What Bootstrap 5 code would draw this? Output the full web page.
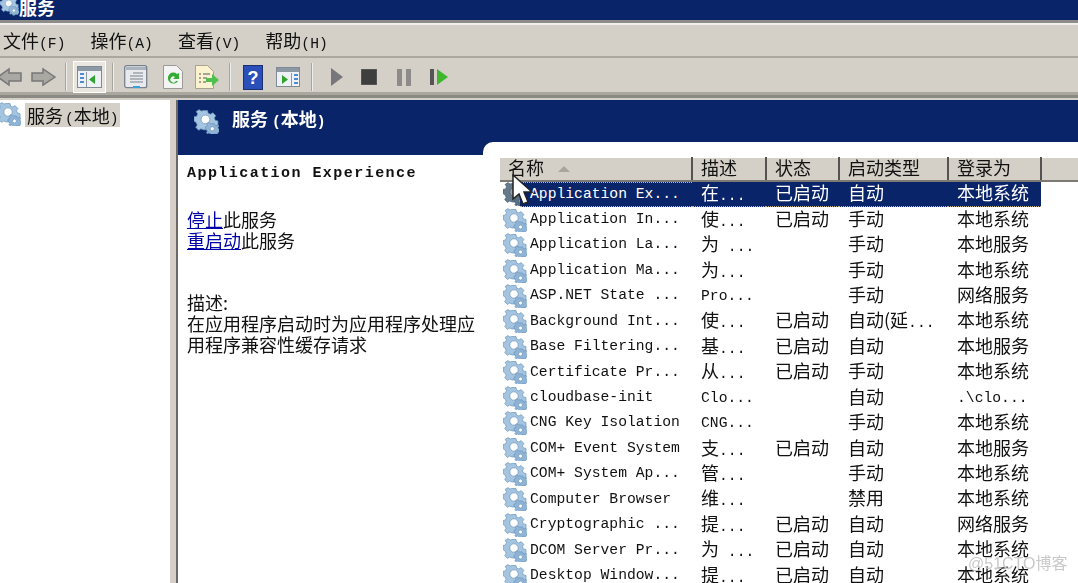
<!DOCTYPE html>
<html lang="zh-CN">
<head>
<meta charset="utf-8">
<title>服务</title>
<link href="https://cdn.jsdelivr.net/npm/bootstrap@5.3.0/dist/css/bootstrap.min.css" rel="stylesheet">
<style>
:root{--navy:#0a246a;--chrome:#d4d0c8;}
html,body{height:583px;overflow:hidden;}
body{background:var(--chrome);font-family:"Noto Sans CJK SC","Liberation Sans",sans-serif;font-size:18px;color:#111;position:relative;filter:blur(.35px);}
.svc-gear{width:24px;height:24px;flex:none;}
.title-strip{height:20px;background:var(--navy);color:#fff;font-weight:700;font-size:18px;line-height:14px;overflow:hidden;}
.title-strip .svc-gear{margin-top:-7px;width:19px;height:24px;}
.menu-strip{height:38px;border-top:3px solid #8e8c88;box-shadow:inset 0 2px 0 #f2f0ec;border-bottom:2px solid #aaa79f;padding-left:3px;gap:25px;}
.menu-strip>span{line-height:35px;font-size:18px;}
.mono{font-family:"Liberation Mono",monospace;font-size:14.7px;}
.cjk{font-family:"Noto Sans CJK SC",sans-serif;font-size:18px;line-height:1;}
.tool-strip{height:37px;border-bottom:3px solid #aaa79f;padding-top:4px;}
.tool-sep{width:2px;height:28px;background:#a8a59e;border-right:1px solid #eee;flex:none;}
.tool-ico{flex:none;display:block;}
.tool-on{width:33px;height:32px;background:#e9e6df;border:1px solid #fff;display:flex;align-items:center;justify-content:center;margin:0 6px;}
.panes{height:488px;border-top:3px solid #8b8984;padding-top:2px;}
.tree-pane{width:170px;background:#fff;flex:none;font-size:18px;}
.tree-sel{background:var(--chrome);line-height:24px;padding:0 1px 0 2px;height:24px;display:inline-block;margin:3px 0 0 4px;}
.tree-sel .paren-gap{margin-left:2px;}
.tree-pane .svc-gear{margin-left:-3px;margin-top:2px;}
.paren-gap{margin-left:4px;}
.split-bar{width:8px;flex:none;background:var(--chrome);border-right:2px solid #6b6966;}
.right-pane{flex:1;min-width:0;background:var(--navy);}
.head-band{height:42px;flex:none;color:#fff;font-weight:700;padding-left:16px;gap:13px;}
.head-band .svc-gear{width:25px;height:25px;margin-top:9px;}
.head-band span{line-height:26px;margin-top:5px;}
.head-band span span{margin-top:0;}
.lower-band{min-height:0;}
.desc-col{width:305px;flex:none;margin-top:13px;background:#fff;padding:9px 0 0 9px;line-height:21.3px;font-size:18px;}
.desc-title{font-family:"Liberation Mono",monospace;font-weight:700;font-size:15px;letter-spacing:1.45px;line-height:20px;margin-bottom:25px;}
.desc-gap{margin-top:40px;}
.desc-col a{color:#0000a8;}
.list-col{flex:1;background:#fff;border-top-left-radius:10px;padding:15px 0 0 17px;overflow:hidden;min-width:0;}
.svc-table{table-layout:fixed;width:578px;margin:0;--bs-table-bg:transparent;font-size:18px;}
.svc-table th{height:23px;padding:0 0 3px 8px;background:var(--chrome);font-weight:400;border:0;border-right:2px solid #55534f;border-bottom:2px solid #7d7a74;border-top:1px solid #fff;line-height:18px;white-space:nowrap;color:#111;vertical-align:middle;}
.svc-table th:last-child{border-right:0;}
.svc-table td{height:25.45px;padding:0 0 0 9px;border:0;white-space:nowrap;line-height:18px;vertical-align:middle;color:#111;}
.svc-table td.cjk{padding-bottom:4px;}
.svc-table td:first-child{padding:0;}
.name-cell{display:flex;align-items:center;height:25.45px;}
.name-cell .svc-gear{margin-left:3px;margin-right:-1px;}
.name-cell span{padding-left:4px;flex:1;height:25.45px;line-height:25px;}
.svc-table .row-on td{background:var(--navy);color:#fff;border-block:1px dotted #c3b27a;}
.svc-table .row-on td:first-child{background:#fff;border:0;}
.svc-table .row-on td:last-child{background:#fff;border:0;}
.row-on .name-cell span{background:var(--navy);color:#fff;border-block:1px dotted #c3b27a;margin-left:-6px;padding-left:10px;position:relative;line-height:22px;}
.row-on .svc-gear{filter:brightness(.62);}
.sort-mark{display:inline-block;width:0;height:0;border:6px solid transparent;border-top:0;border-bottom:6px solid #a8a59e;margin-left:14px;vertical-align:3px;}
.svc-pointer{position:absolute;left:511px;top:174px;width:22px;height:32px;}
.mark-text{position:absolute;left:968px;top:552px;font-size:16px;color:#c9c9c9;font-family:"Liberation Sans","Noto Sans CJK SC",sans-serif;}
</style>
</head>
<body>
<svg width="0" height="0" class="position-absolute">
<defs>
<symbol id="gear" viewBox="0 0 24 24">
<g fill="#a4c4e0" stroke="#6c96bd" stroke-width=".7">
<path d="M9 1h4l.6 2.6 2.3.9 2.2-1.4 2.8 2.8-1.4 2.2.9 2.3 2.6.6v4l-2.6.6-.9 2.3 1 1.6H11l-2-.1-2.3-.9-2.2 1.4-2.8-2.8 1.4-2.2-.9-2.3L0 11V7l2.6-.6.9-2.3L2.1 1.900 4.900 .1 7 1.500z" transform="translate(0 .5)"/>
<circle cx="11" cy="10" r="4.200" fill="#fff"/>
<path d="M17 14h2.600l.4 1.600 1.500.6 1.400-.9 1 1-.9 1.400.4 1.500 1.200.4v2.400l-1.500.4-.6 1.500H19l-.4 1H16l-.4-1.300-1.300-.6-1.400.7-1-1 .9-1.400-.5-1.300-1.300-.5v-2.400l1.400-.4.600-1.400-.9-1.300 1.700-1.200 1.300.9z" fill="#8fb4d6"/>
<circle cx="17.500" cy="19" r="2" fill="#fff"/>
</g>
</symbol>
</defs>
</svg>

<div class="title-strip d-flex">
<svg class="svc-gear"><use href="#gear"/></svg><span>服务</span>
</div>

<div class="menu-strip d-flex">
<span>文件<span class="mono">(F)</span></span>
<span>操作<span class="mono">(A)</span></span>
<span>查看<span class="mono">(V)</span></span>
<span>帮助<span class="mono">(H)</span></span>
</div>

<div class="tool-strip d-flex align-items-center">
<svg class="tool-ico ms-0" width="22" height="20" viewBox="0 0 22 20"><path d="M-2 10 9 2v4h12v8H9v4z" fill="#a9a8a3" stroke="#777" stroke-width="1.500"/></svg>
<svg class="tool-ico ms-2" width="26" height="20" viewBox="0 0 26 20"><path d="M25 10 13 2v4H2v8h11v4z" fill="#a9a8a3" stroke="#777" stroke-width="1.500"/></svg>
<div class="tool-sep" style="margin-left:9px"></div>
<div class="tool-on"><svg width="25" height="22" viewBox="0 0 25 22"><rect x=".5" y=".5" width="24" height="21" fill="#eef1f5" stroke="#7e8a96"/><rect x="1" y="1" width="23" height="4" fill="#8d98a5"/><rect x="9" y="6" width="1" height="15" fill="#8d98a5"/><path d="M3 8h4M3 12h4M3 16h4" stroke="#4f8ad0" stroke-width="2"/><path d="M18 9v9l-6-4.500z" fill="#2ea52e"/></svg></div>
<div class="tool-sep"></div>
<svg class="tool-ico" style="margin-left:10px" width="24" height="24" viewBox="0 0 24 24"><rect x=".7" y=".7" width="22" height="22" rx="2" fill="#e8eaee" stroke="#76818d" stroke-width="1.300"/><rect x="2" y="2" width="20" height="3" fill="#aab4be"/><path d="M9 8h10M6 11h13M6 14h13M6 17h13" stroke="#76818d"/><rect x="9" y="21" width="7" height="2" fill="#36a2e0"/></svg>
<svg class="tool-ico" style="margin-left:15px" width="20" height="24" viewBox="0 0 20 24"><path d="M.5 .5h13l6 6v17H.5z" fill="#f4f4f4" stroke="#9a9a9a"/><path d="M15 16a5.500 5.500 0 1 1-1-7l2-1v6h-6l2-2a3 3 0 1 0 1 4z" fill="#35ad35"/></svg>
<svg class="tool-ico" style="margin-left:12px" width="24" height="24" viewBox="0 0 24 24"><path d="M.5 .5h12l6 6v17H.5z" fill="#fbf3cf" stroke="#a7a38f"/><path d="M4 9h2M8 9h7M4 13h2M8 13h4M4 17h2M8 17h3" stroke="#555"/><path d="M11 13h6v-4l7 6-7 6v-4h-6z" fill="#4fbf4f"/></svg>
<div class="tool-sep" style="margin-left:10px"></div>
<svg class="tool-ico" style="margin-left:12px" width="20" height="25" viewBox="0 0 20 25"><rect x=".5" y=".5" width="19" height="24" fill="#2a4fb8" stroke="#1b2f73"/><text x="10" y="19" text-anchor="middle" font-family="Liberation Sans" font-weight="700" font-size="18" fill="#fff">?</text></svg>
<svg class="tool-ico" style="margin-left:13px" width="24" height="20" viewBox="0 0 24 20"><rect x=".5" y=".5" width="23" height="19" fill="#eef1f5" stroke="#7e8a96"/><rect x="1" y="1" width="22" height="4" fill="#8d98a5"/><rect x="15" y="6" width="1" height="13" fill="#8d98a5"/><path d="M18 8h4M18 12h4M18 16h4" stroke="#4f8ad0" stroke-width="2"/><path d="M6 8v9l6-4.500z" fill="#2ea52e"/></svg>
<div class="tool-sep" style="margin-left:11px"></div>
<svg class="tool-ico" style="margin-left:18px" width="12" height="18" viewBox="0 0 12 18"><path d="M0 0l12 9-12 9z" fill="#77767a"/></svg>
<svg class="tool-ico" style="margin-left:18px" width="16" height="16" viewBox="0 0 16 16"><rect width="16" height="16" fill="#3e3e3e" stroke="#6a6a6a"/></svg>
<svg class="tool-ico" style="margin-left:20px" width="14" height="17" viewBox="0 0 14 17"><rect width="5" height="17" fill="#8c8b8a"/><rect x="9" width="5" height="17" fill="#8c8b8a"/></svg>
<svg class="tool-ico" style="margin-left:19px" width="18" height="16" viewBox="0 0 18 16"><rect width="4" height="16" fill="#555"/><path d="M7 0l11 8-11 8z" fill="#3eb62e"/></svg>
</div>

<div class="panes d-flex">
<div class="tree-pane">
<div class="d-flex align-items-start"><svg class="svc-gear"><use href="#gear"/></svg><span class="tree-sel">服务<span class="mono paren-gap">(</span>本地<span class="mono">)</span></span></div>
</div>
<div class="split-bar"></div>
<div class="right-pane d-flex flex-column">
<div class="head-band d-flex align-items-start">
<svg class="svc-gear"><use href="#gear"/></svg><span>服务<span class="mono fw-bold paren-gap">(</span>本地<span class="mono fw-bold">)</span></span>
</div>
<div class="lower-band d-flex flex-fill">
<div class="desc-col">
<div class="desc-title">Application Experience</div>
<div><a href="#">停止</a>此服务</div>
<div><a href="#">重启动</a>此服务</div>
<div class="desc-gap">描述:</div>
<div>在应用程序启动时为应用程序处理应<br>用程序兼容性缓存请求</div>
</div>
<div class="list-col">
<table class="table svc-table">
<colgroup><col style="width:192px"><col style="width:74px"><col style="width:73px"><col style="width:109px"><col style="width:93px"><col></colgroup>
<thead><tr><th>名称<span class="sort-mark"></span></th><th>描述</th><th>状态</th><th>启动类型</th><th>登录为</th><th></th></tr></thead>
<tbody class="mono">
<tr class="row-on"><td><div class="name-cell"><svg class="svc-gear"><use href="#gear"/></svg><span>Application Ex...</span></div></td><td><b class="fw-normal cjk">在</b>...</td><td class="cjk">已启动</td><td class="cjk">自动</td><td class="cjk">本地系统</td><td></td></tr>
<tr><td><div class="name-cell"><svg class="svc-gear"><use href="#gear"/></svg><span>Application In...</span></div></td><td><b class="fw-normal cjk">使</b>...</td><td class="cjk">已启动</td><td class="cjk">手动</td><td class="cjk">本地系统</td><td></td></tr>
<tr><td><div class="name-cell"><svg class="svc-gear"><use href="#gear"/></svg><span>Application La...</span></div></td><td><b class="fw-normal cjk">为</b> ...</td><td></td><td class="cjk">手动</td><td class="cjk">本地服务</td><td></td></tr>
<tr><td><div class="name-cell"><svg class="svc-gear"><use href="#gear"/></svg><span>Application Ma...</span></div></td><td><b class="fw-normal cjk">为</b>...</td><td></td><td class="cjk">手动</td><td class="cjk">本地系统</td><td></td></tr>
<tr><td><div class="name-cell"><svg class="svc-gear"><use href="#gear"/></svg><span>ASP.NET State ...</span></div></td><td>Pro...</td><td></td><td class="cjk">手动</td><td class="cjk">网络服务</td><td></td></tr>
<tr><td><div class="name-cell"><svg class="svc-gear"><use href="#gear"/></svg><span>Background Int...</span></div></td><td><b class="fw-normal cjk">使</b>...</td><td class="cjk">已启动</td><td><b class="fw-normal cjk">自动(延</b>...</td><td class="cjk">本地系统</td><td></td></tr>
<tr><td><div class="name-cell"><svg class="svc-gear"><use href="#gear"/></svg><span>Base Filtering...</span></div></td><td><b class="fw-normal cjk">基</b>...</td><td class="cjk">已启动</td><td class="cjk">自动</td><td class="cjk">本地服务</td><td></td></tr>
<tr><td><div class="name-cell"><svg class="svc-gear"><use href="#gear"/></svg><span>Certificate Pr...</span></div></td><td><b class="fw-normal cjk">从</b>...</td><td class="cjk">已启动</td><td class="cjk">手动</td><td class="cjk">本地系统</td><td></td></tr>
<tr><td><div class="name-cell"><svg class="svc-gear"><use href="#gear"/></svg><span>cloudbase-init</span></div></td><td>Clo...</td><td></td><td class="cjk">自动</td><td>.\clo...</td><td></td></tr>
<tr><td><div class="name-cell"><svg class="svc-gear"><use href="#gear"/></svg><span>CNG Key Isolation</span></div></td><td>CNG...</td><td></td><td class="cjk">手动</td><td class="cjk">本地系统</td><td></td></tr>
<tr><td><div class="name-cell"><svg class="svc-gear"><use href="#gear"/></svg><span>COM+ Event System</span></div></td><td><b class="fw-normal cjk">支</b>...</td><td class="cjk">已启动</td><td class="cjk">自动</td><td class="cjk">本地服务</td><td></td></tr>
<tr><td><div class="name-cell"><svg class="svc-gear"><use href="#gear"/></svg><span>COM+ System Ap...</span></div></td><td><b class="fw-normal cjk">管</b>...</td><td></td><td class="cjk">手动</td><td class="cjk">本地系统</td><td></td></tr>
<tr><td><div class="name-cell"><svg class="svc-gear"><use href="#gear"/></svg><span>Computer Browser</span></div></td><td><b class="fw-normal cjk">维</b>...</td><td></td><td class="cjk">禁用</td><td class="cjk">本地系统</td><td></td></tr>
<tr><td><div class="name-cell"><svg class="svc-gear"><use href="#gear"/></svg><span>Cryptographic ...</span></div></td><td><b class="fw-normal cjk">提</b>...</td><td class="cjk">已启动</td><td class="cjk">自动</td><td class="cjk">网络服务</td><td></td></tr>
<tr><td><div class="name-cell"><svg class="svc-gear"><use href="#gear"/></svg><span>DCOM Server Pr...</span></div></td><td><b class="fw-normal cjk">为</b> ...</td><td class="cjk">已启动</td><td class="cjk">自动</td><td class="cjk">本地系统</td><td></td></tr>
<tr><td><div class="name-cell"><svg class="svc-gear"><use href="#gear"/></svg><span>Desktop Window...</span></div></td><td><b class="fw-normal cjk">提</b>...</td><td class="cjk">已启动</td><td class="cjk">自动</td><td class="cjk">本地系统</td><td></td></tr>
</tbody>
</table>
</div>
</div>
</div>
</div>

<svg class="svc-pointer" viewBox="0 0 22 32"><path d="M2 1v24l6-5 4 10 5-2-4-10h8z" fill="#fff" stroke="#222" stroke-width="1.500"/></svg>
<div class="mark-text">@51CTO博客</div>
</body>
</html>
